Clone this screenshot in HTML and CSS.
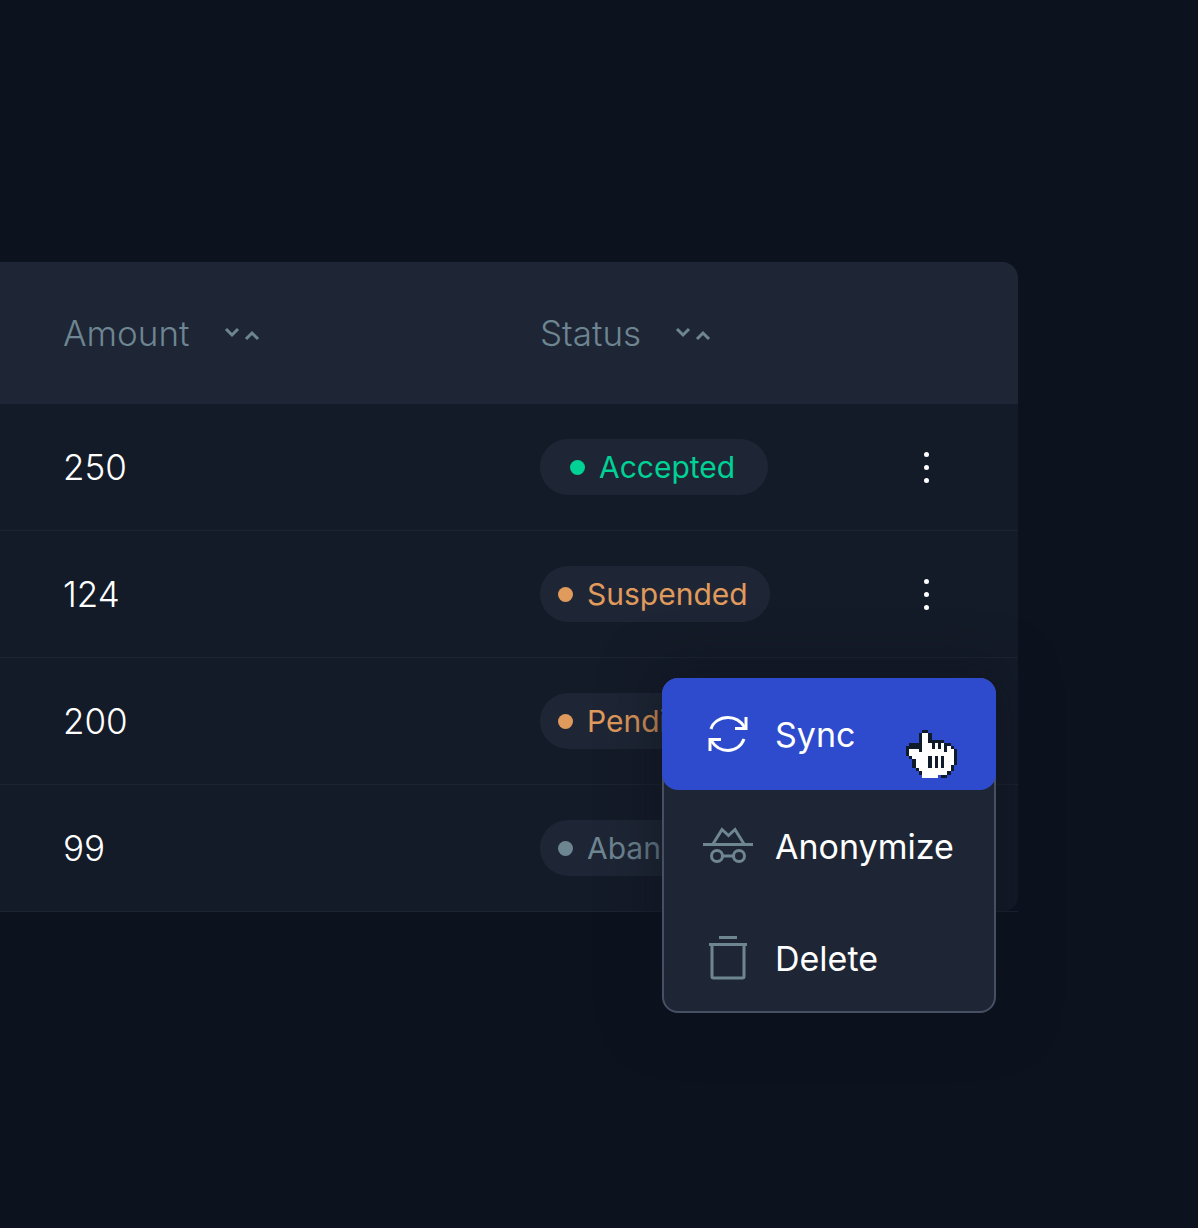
FILE: index.html
```html
<!DOCTYPE html>
<html lang="en">
<head>
    <meta charset="UTF-8">
    <title>Payments table</title>
    <link rel="stylesheet" href="styles.css">
</head>
<body>
    <div class="table">
        <div class="row head">
            <div class="col-title">Amount
                <svg class="sort" width="36" height="16" viewBox="0 0 36 16" fill="none" stroke="currentColor" stroke-width="3">
                    <polyline points="2 3 8 9 14 3"></polyline>
                    <polyline points="22 13 28 7 34 13"></polyline>
                </svg>
            </div>
            <div class="col-title">Status
                <svg class="sort" width="36" height="16" viewBox="0 0 36 16" fill="none" stroke="currentColor" stroke-width="3">
                    <polyline points="2 3 8 9 14 3"></polyline>
                    <polyline points="22 13 28 7 34 13"></polyline>
                </svg>
            </div>
            <div></div>
        </div>
        <div class="row">
            <div class="amount">250</div>
            <div><span class="pill pill-accepted"><i class="dot"></i>Accepted</span></div>
            <div class="kebab"><i></i><i></i><i></i></div>
        </div>
        <div class="row">
            <div class="amount">124</div>
            <div><span class="pill pill-warn"><i class="dot"></i>Suspended</span></div>
            <div class="kebab"><i></i><i></i><i></i></div>
        </div>
        <div class="row">
            <div class="amount">200</div>
            <div><span class="pill pill-warn"><i class="dot"></i>Pending</span></div>
            <div></div>
        </div>
        <div class="row">
            <div class="amount">99</div>
            <div><span class="pill pill-muted"><i class="dot"></i>Abandoned</span></div>
            <div></div>
        </div>

        <div class="menu">
            <div class="menu-item active">
                <svg class="menu-icon" width="50" height="44" viewBox="0 0 50 44" fill="none" stroke="currentColor" stroke-width="3">
                    <path d="M8 17C10 10 17 5.500 25 5.500C32 5.500 38 9.500 41.500 15"></path>
                    <polyline points="43 5 43 16.500 32 16.500"></polyline>
                    <path d="M41 27C38.500 34 32 38.500 25 38.500C18 38.500 12 34.500 8.500 29"></path>
                    <polyline points="7 39 7 27.500 18 27.500"></polyline>
                </svg>
                Sync
            </div>
            <div class="menu-item">
                <svg class="menu-icon" width="50" height="44" viewBox="0 0 50 44" fill="none" stroke="currentColor" stroke-width="3">
                    <polyline points="10 20 19 5.500 25.500 11.500 32 5.500 41 20"></polyline>
                    <line x1="0" y1="20.500" x2="50" y2="20.500"></line>
                    <circle cx="14" cy="32" r="5.500"></circle>
                    <circle cx="36" cy="32" r="5.500"></circle>
                    <line x1="19.500" y1="32" x2="30.500" y2="32"></line>
                </svg>
                Anonymize
            </div>
            <div class="menu-item">
                <svg class="menu-icon" width="50" height="44" viewBox="0 0 50 44" fill="none" stroke="currentColor" stroke-width="3">
                    <line x1="16" y1="1.500" x2="34" y2="1.500"></line>
                    <line x1="6" y1="8.500" x2="44" y2="8.500"></line>
                    <path d="M9 8.500V40.500C9 41.300 9.700 42 10.500 42H39.500C40.300 42 41 41.300 41 40.500V8.500"></path>
                </svg>
                Delete
            </div>
        </div>

        <svg class="cursor" width="51" height="51" viewBox="0 0 16 16" shape-rendering="crispEdges">
            <path class="cursor-dark" d="M5 0h2v1h1v2h4v1h2v1h1v1h1v5h-1v2h-1v1h-1v1h-2v-1h-1v1H5v-1H4v-1H3v-1H2V9H1V8H0V5h1V4h3V1h1z"></path>
            <path class="cursor-light" d="M5 1h2v3h5v1h2v1h1v5h-1v2h-1v1h-3v1H5v-2H4v-1H3V9H2V8H1V6h3v1h1z"></path>
            <path class="cursor-dark" d="M7 8h1v4H7zM9 8h1v4H9zM11 8h1v4h-1zM8 4h1v2H8zM10 4h1v2h-1zM12 5h1v2h-1z"></path>
        </svg>
    </div>
</body>
</html>
```

FILE: styles.css
```css
:root {
    --page: #0d131e;
    --head: #1e2635;
    --body: #141b28;
    --line: #1c2431;
    --muted: #6e8592;
    --orange: #e09a5c;
    --green: #00d195;
    --blue: #2d4bcc;
}

html, body {
    margin: 0;
    padding: 0;
}

body {
    background-color: var(--page);
    font-family: Inter, "Noto Sans", sans-serif;
    color: white;
    height: 1228px;
    overflow: hidden;
    padding-top: 262px;
    box-sizing: border-box;
}

.table {
    position: relative;
    width: 1018px;
    height: 650px;
    background-color: var(--body);
    border-radius: 0 16px 16px 0;
}

.row {
    display: grid;
    grid-template-columns: 477px 1fr 184px;
    align-items: center;
    height: 126px;
    padding-left: 63px;
    border-bottom: 1px solid var(--line);
}

.row:last-of-type {
    border-bottom: none;
}

.head {
    height: 142px;
    background-color: var(--head);
    border-bottom: none;
    border-radius: 0 16px 0 0;
}

.col-title {
    display: flex;
    align-items: center;
    gap: 34px;
    font-size: 35px;
    font-weight: 300;
    color: var(--muted);
}

.sort {
    margin-top: 2px;
}

.amount {
    font-size: 35px;
    font-weight: 300;
}

.pill {
    display: inline-flex;
    align-items: center;
    gap: 14px;
    height: 56px;
    padding: 0 22px 0 18px;
    border-radius: 28px;
    background-color: var(--head);
    font-size: 30px;
    white-space: nowrap;
}

.pill-accepted {
    padding: 0 33px 0 30px;
    color: var(--green);
}

.pill-warn {
    color: var(--orange);
}

.pill-muted {
    color: var(--muted);
}

.dot {
    width: 15px;
    height: 15px;
    border-radius: 50%;
    background-color: currentColor;
}

.kebab {
    display: flex;
    flex-direction: column;
    align-items: center;
    gap: 8px;
}

.kebab i {
    width: 5px;
    height: 5px;
    border-radius: 50%;
    background-color: white;
}

.menu {
    position: absolute;
    left: 662px;
    top: 416px;
    width: 334px;
    height: 335px;
    box-sizing: border-box;
    background-color: var(--head);
    border: 2px solid #465062;
    border-radius: 16px;
    box-shadow: 0 0 50px 10px rgba(13, 19, 30, 0.55);
}

.menu-item {
    display: flex;
    align-items: center;
    gap: 22px;
    height: 112px;
    padding-left: 39px;
    font-size: 34px;
    color: white;
}

.menu-item .menu-icon {
    color: var(--muted);
}

.menu-item.active {
    margin: -2px -2px 0;
    padding-left: 41px;
    background-color: var(--blue);
    border-radius: 16px;
}

.menu-item.active .menu-icon {
    color: white;
}

.cursor {
    position: absolute;
    left: 906px;
    top: 468px;
}

.cursor-dark {
    fill: #0f1a2b;
}

.cursor-light {
    fill: white;
}
```
